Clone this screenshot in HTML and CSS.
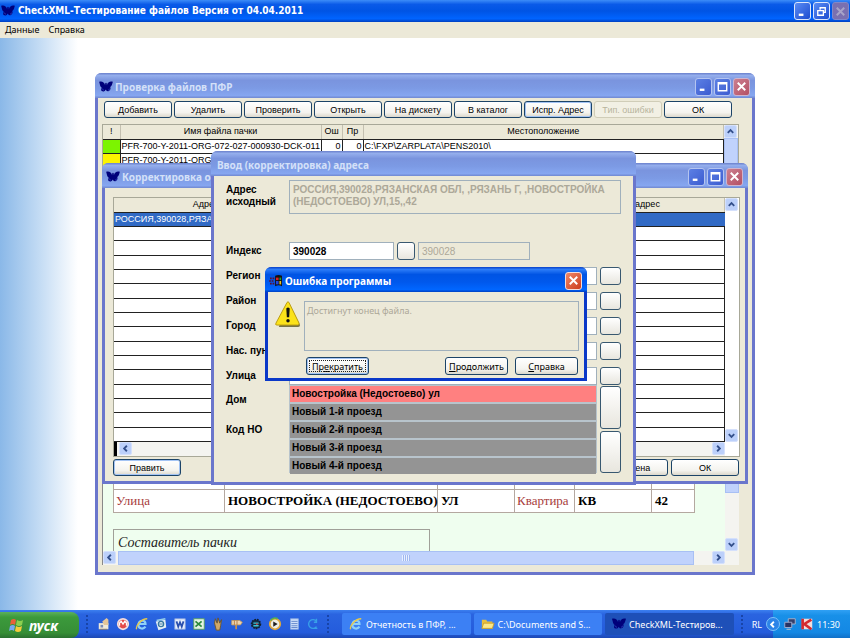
FILE: index.html
```html
<!DOCTYPE html>
<html lang="ru">
<head>
    <meta charset="UTF-8">
    <meta name="viewport" content="width=device-width, initial-scale=1.0">
    <title>CheckXML-Тестирование файлов</title>
    <link rel="stylesheet" href="styles.css">
</head>
<body>
    <!-- Общие значки -->
    <svg class="defs" aria-hidden="true">
        <symbol id="butterfly" viewBox="0 0 16 14">
            <path d="M0 1c3-1 6 0 7 4 0-2 0-3 1-3s1 1 1 3c1-4 4-5 7-4-1 3-1 5-3 6 1 3-1 5-3 5-1 0-2-1-2-2-1 1-2 3-4 2-2 0-2-2-1-4C1 7 1 4 0 1z" fill="#00007a"/>
            <path d="M4 9l1 2M12 9l-1 2" stroke="#3347c8" stroke-width="1"/>
        </symbol>
        <symbol id="min" viewBox="0 0 16 16"><path d="M4 11.500h5" stroke="#fff" stroke-width="2.500"/></symbol>
        <symbol id="max" viewBox="0 0 16 16"><path d="M3.500 4h9v8.500h-9z M3.500 5h9" stroke="#fff" stroke-width="1.500" fill="none"/></symbol>
        <symbol id="restore" viewBox="0 0 16 16"><path d="M6.500 6V4H12v5h-2M4 7h6v5H4z" stroke="#fff" stroke-width="1.400" fill="none"/></symbol>
        <symbol id="close" viewBox="0 0 16 16"><path d="M4 4l8 8M12 4l-8 8" stroke="currentColor" stroke-width="2"/></symbol>
        <symbol id="arrow" viewBox="0 0 12 12"><path d="M3 7.500l3-3 3 3" stroke="#34508c" stroke-width="2" fill="none"/></symbol>
        <symbol id="ie" viewBox="0 0 16 16">
            <path d="M12 11c-3 4-9 2-8-3s8-5 8 0H5" fill="none" stroke="#8fd0f8" stroke-width="2.500"/>
            <path d="M2 14c-2-3 5-12 12-12" fill="none" stroke="#e8c84a" stroke-width="1.500"/>
        </symbol>
    </svg>

    <header class="app-title">
        <svg class="ico"><use href="#butterfly"/></svg>
        <h1>CheckXML-Тестирование файлов Версия от 04.04.2011</h1>
        <div class="win-buttons">
            <button aria-label="Свернуть"><svg><use href="#min"/></svg></button>
            <button aria-label="Восстановить"><svg><use href="#restore"/></svg></button>
            <button class="off" aria-label="Закрыть" disabled><svg><use href="#close"/></svg></button>
        </div>
    </header>
    <nav class="menu">
        <a href="#">Данные</a>
        <a href="#">Справка</a>
    </nav>

    <main class="desktop">
        <!-- Проверка файлов -->
        <section class="window win-check">
            <div class="title-bar">
                <svg class="ico"><use href="#butterfly"/></svg>
                <h2>Проверка файлов ПФР</h2>
                <div class="win-buttons">
                    <button aria-label="Свернуть"><svg><use href="#min"/></svg></button>
                    <button aria-label="Развернуть"><svg><use href="#max"/></svg></button>
                    <button class="red" aria-label="Закрыть"><svg><use href="#close"/></svg></button>
                </div>
            </div>
            <div class="toolbar">
                <button class="btn">Добавить</button>
                <button class="btn">Удалить</button>
                <button class="btn">Проверить</button>
                <button class="btn">Открыть</button>
                <button class="btn">На дискету</button>
                <button class="btn">В каталог</button>
                <button class="btn focus">Испр. Адрес</button>
                <button class="btn" disabled>Тип. ошибки</button>
                <button class="btn">ОК</button>
            </div>
            <div class="grid-box files">
                <table>
                    <colgroup><col class="c-mark"><col class="c-name"><col class="c-num"><col class="c-num"><col></colgroup>
                    <thead><tr><th>!</th><th>Имя файла пачки</th><th>Ош</th><th>Пр</th><th>Местоположение</th></tr></thead>
                    <tbody>
                        <tr><td class="green"></td><td>PFR-700-Y-2011-ORG-072-027-000930-DCK-011</td><td class="num">0</td><td class="num">0</td><td>C:\FXP\ZARPLATA\PENS2010\</td></tr>
                        <tr><td class="yellow"></td><td>PFR-700-Y-2011-ORG</td><td></td><td></td><td></td></tr>
                    </tbody>
                </table>
                <div class="vscroll"><button aria-label="Вверх"><svg><use href="#arrow"/></svg></button><span class="thumb"></span></div>
            </div>
            <div class="report">
                <div class="report-page">
                    <table>
                        <colgroup><col class="r1"><col class="r2"><col class="r3"><col class="r4"><col class="r3"><col></colgroup>
                        <tr><td></td><td></td><td></td><td></td><td></td><td></td></tr>
                        <tr><td class="key">Улица</td><td>НОВОСТРОЙКА (НЕДОСТОЕВО)</td><td>УЛ</td><td class="key">Квартира</td><td>КВ</td><td>42</td></tr>
                    </table>
                    <p class="author">Составитель пачки</p>
                </div>
                <div class="vscroll"><span class="thumb"></span><button class="down" aria-label="Вниз"><svg><use href="#arrow"/></svg></button></div>
                <div class="hscroll">
                    <button class="left" aria-label="Влево"><svg><use href="#arrow"/></svg></button>
                    <span class="thumb"><i></i></span>
                    <button class="right" aria-label="Вправо"><svg><use href="#arrow"/></svg></button>
                </div>
            </div>
        </section>

        <!-- Корректировка -->
        <section class="window win-fix">
            <div class="title-bar">
                <svg class="ico"><use href="#butterfly"/></svg>
                <h2>Корректировка о</h2>
                <div class="win-buttons">
                    <button aria-label="Свернуть"><svg><use href="#min"/></svg></button>
                    <button aria-label="Развернуть"><svg><use href="#max"/></svg></button>
                    <button class="red" aria-label="Закрыть"><svg><use href="#close"/></svg></button>
                </div>
            </div>
            <div class="grid-box addresses">
                <table>
                    <colgroup><col class="a1"><col><col class="a3"></colgroup>
                    <thead><tr><th>Адрес</th><th></th><th>адрес</th></tr></thead>
                    <tbody>
                        <tr class="selected"><td>РОССИЯ,390028,РЯЗАНСКАЯ</td><td></td><td></td></tr>
                        <tr><td colspan="3"></td></tr>
                        <tr><td colspan="3"></td></tr>
                        <tr><td colspan="3"></td></tr>
                        <tr><td colspan="3"></td></tr>
                        <tr><td colspan="3"></td></tr>
                        <tr><td colspan="3"></td></tr>
                        <tr><td colspan="3"></td></tr>
                        <tr><td colspan="3"></td></tr>
                        <tr><td colspan="3"></td></tr>
                        <tr><td colspan="3"></td></tr>
                        <tr><td colspan="3"></td></tr>
                        <tr><td colspan="3"></td></tr>
                        <tr><td colspan="3"></td></tr>
                        <tr><td colspan="3"></td></tr>
                        <tr><td colspan="3"></td></tr>
                    </tbody>
                </table>
                <div class="vscroll"><button aria-label="Вверх"><svg><use href="#arrow"/></svg></button><button class="down" aria-label="Вниз"><svg><use href="#arrow"/></svg></button></div>
                <div class="hscroll">
                    <span class="split"></span>
                    <button class="left" aria-label="Влево"><svg><use href="#arrow"/></svg></button>
                    <button class="right" aria-label="Вправо"><svg><use href="#arrow"/></svg></button>
                </div>
            </div>
            <div class="fix-buttons">
                <button class="btn focus">Править</button>
                <button class="btn push">Отмена</button>
                <button class="btn">ОК</button>
            </div>
        </section>

        <!-- Ввод адреса -->
        <section class="window win-input">
            <div class="title-bar"><h2>Ввод (корректировка) адреса</h2></div>
            <form class="address-form">
                <div class="row source">
                    <label for="source">Адрес исходный</label>
                    <textarea id="source" disabled>РОССИЯ,390028,РЯЗАНСКАЯ ОБЛ, ,РЯЗАНЬ Г, ,НОВОСТРОЙКА (НЕДОСТОЕВО) УЛ,15,,42</textarea>
                </div>
                <div class="row">
                    <label for="zip">Индекс</label>
                    <input class="zip" id="zip" value="390028">
                    <button class="pick small" type="button" aria-label="Выбрать индекс"></button>
                    <input class="zip2" aria-label="Индекс" value="390028" disabled>
                </div>
                <div class="row"><label for="region">Регион</label><input id="region"><button class="pick" type="button" aria-label="Выбрать регион"></button></div>
                <div class="row"><label for="area">Район</label><input id="area"><button class="pick" type="button" aria-label="Выбрать район"></button></div>
                <div class="row"><label for="city">Город</label><input id="city"><button class="pick" type="button" aria-label="Выбрать город"></button></div>
                <div class="row"><label for="place">Нас. пункт</label><input id="place"><button class="pick" type="button" aria-label="Выбрать пункт"></button></div>
                <div class="row"><label for="street">Улица</label><input id="street"><button class="pick" type="button" aria-label="Выбрать улицу"></button></div>
                <div class="lower">
                    <div class="lower-labels"><span>Дом</span><span>Код НО</span></div>
                    <ul class="streets">
                        <li class="current">Новостройка (Недостоево) ул</li>
                        <li>Новый 1-й проезд</li>
                        <li>Новый 2-й проезд</li>
                        <li>Новый 3-й проезд</li>
                        <li>Новый 4-й проезд</li>
                    </ul>
                    <div class="tall">
                        <button class="pick" type="button" aria-label="Страница вверх"></button>
                        <button class="pick" type="button" aria-label="Страница вниз"></button>
                    </div>
                </div>
            </form>
        </section>

        <!-- Сообщение об ошибке -->
        <section class="window win-error active" role="dialog" aria-label="Ошибка программы">
            <div class="title-bar">
                <svg class="ico" viewBox="0 0 16 14">
                    <path d="M7 1q4-2 8 0v12q-4-2-8 0z" fill="#111"/>
                    <path d="M1 4h5M0 7h6M1 10h5" stroke="#5a1030" stroke-width="2" stroke-dasharray="2 1"/>
                    <path d="M8 3h3v3H8z" fill="#e02020"/><path d="M12 3h2v3h-2z" fill="#18a030"/>
                    <path d="M8 7h3v4H8z" fill="#2048e0"/><path d="M12 7h2v4h-2z" fill="#e8c020"/>
                </svg>
                <h2>Ошибка программы</h2>
                <div class="win-buttons"><button class="red" aria-label="Закрыть"><svg><use href="#close"/></svg></button></div>
            </div>
            <div class="error-body">
                <svg class="warn" viewBox="0 0 27 27">
                    <path d="M14 2l12 23q0 2-2 2H4z" fill="#777448"/>
                    <path d="M12.500 1.500q1-1.500 2 0L25 23q.5 2-1.500 2H2q-2 0-1-2z" fill="#fbe21a" stroke="#b99a10"/>
                    <path d="M12.500 8q1-1 2 0l-.5 8h-1z" fill="#111" stroke="#111" stroke-width="1.500"/>
                    <circle cx="13.500" cy="20.500" r="1.800" fill="#111"/>
                </svg>
                <textarea aria-label="Текст ошибки" disabled>Достигнут конец файла.</textarea>
            </div>
            <div class="error-buttons">
                <button class="btn focus dotted">Пр<u>е</u>кратить</button>
                <button class="btn push"><u>П</u>родолжить</button>
                <button class="btn"><u>С</u>правка</button>
            </div>
        </section>
    </main>

    <!-- Панель задач -->
    <footer class="taskbar">
        <button class="start">
            <svg viewBox="0 0 16 16">
                <path d="M2 3q3-2 5 0L6 8Q4 6 1 8z" fill="#e8603a"/><path d="M8 3q3 2 6 0l-1 5q-3 2-6 0z" fill="#8cd050"/>
                <path d="M1 9q3-2 5 0l-1 5q-2-2-5 0z" fill="#78a8f0"/><path d="M7 9q3 2 6 0l-1 5q-3 2-6 0z" fill="#f4cc3c"/>
            </svg>
            пуск
        </button>
        <i class="grip"></i>
        <div class="quick">
            <svg viewBox="0 0 16 16"><path d="M2 7h11v7H2z" fill="#f0ead8"/><path d="M6 5l5-4 2 2v6H8z" fill="#e3c69a"/><path d="M4 9h3v3H4z" fill="#7a8cb8"/><path d="M3 14h9" stroke="#876"/></svg>
            <svg viewBox="0 0 16 16"><circle cx="8" cy="8" r="6" fill="#e34a4a" stroke="#f4dede" stroke-width="2"/><path d="M4 10V7l2-2 2 3 2-3 2 2v3" fill="none" stroke="#fff" stroke-width="1.500"/></svg>
            <svg><use href="#ie"/></svg>
            <svg viewBox="0 0 16 16"><path d="M2 5l11-2 1 9-9 3z" fill="#e6f0f4"/><path d="M3 4l10-2" stroke="#9ad0e8" stroke-width="2"/><circle cx="8" cy="8" r="3" fill="none" stroke="#3878a0" stroke-width="1.500"/><path d="M6 8h4" stroke="#3878a0"/></svg>
            <svg viewBox="0 0 16 16"><path d="M2 2h12v12H2z" fill="#e8effc" stroke="#88a4dc"/><path d="M4 5l2 6 2-5 2 5 2-6" fill="none" stroke="#2a4fae" stroke-width="2"/></svg>
            <svg viewBox="0 0 16 16"><path d="M2 2h12v12H2z" fill="#e4f4e4" stroke="#56a05a"/><path d="M4 5l7 6M11 5l-7 6" stroke="#2c8a3c" stroke-width="2"/></svg>
            <svg viewBox="0 0 16 16"><path d="M5 2l2 5 1-6 2 6 2-4-1 7-1 5H6L4 7z" fill="#d0a868" stroke="#6c5428"/></svg>
            <svg viewBox="0 0 16 16"><path d="M2 4h9l3 2-2 3H2z" fill="#eed4ae" stroke="#c49a60"/><path d="M5 4v5M8 4v5" stroke="#b4763c"/><path d="M7 9v5" stroke="#c89050" stroke-width="2"/></svg>
            <svg viewBox="0 0 16 16"><circle cx="8" cy="8" r="5" fill="#163048" stroke="#102030" stroke-width="2" stroke-dasharray="2 1"/><path d="M5 7h6M5 10h6" stroke="#3cc4d8" stroke-width="1.500"/><circle cx="9" cy="8" r="1" fill="#e04040"/></svg>
            <svg viewBox="0 0 16 16"><circle cx="8" cy="8" r="6" fill="#f0f0e4" stroke="#e0a83c" stroke-width="2"/><path d="M3 4a6 6 0 0 1 8-2" stroke="#58b050" stroke-width="2" fill="none"/><path d="M6 5l5 3-5 3z" fill="#222"/></svg>
            <svg viewBox="0 0 16 16"><path d="M4 2h9v12H4z" fill="#cfe0fa" stroke="#88a8e0"/><path d="M5 5h7M5 7.500h7M5 10h7M5 12h7" stroke="#5a80c8"/></svg>
            <svg viewBox="0 0 16 16"><path d="M12 5a5 5 0 1 0 0 6M12 2v4H9M8 13h5" fill="none" stroke="#38a0e8" stroke-width="1.500"/></svg>
        </div>
        <i class="grip"></i>
        <div class="tasks">
            <button><svg><use href="#ie"/></svg><span>Отчетность в ПФР, ...</span></button>
            <button><svg viewBox="0 0 16 16"><path d="M1 3h5l1 2h6v8H1z" fill="#e8c040"/><path d="M3 7h12l-2 6H1z" fill="#fbe88a" stroke="#c89c28"/></svg><span>C:\Documents and S...</span></button>
            <button class="pressed"><svg><use href="#butterfly"/></svg><span>CheckXML-Тестиров...</span></button>
        </div>
        <i class="grip"></i>
        <span class="lang">RL</span>
        <div class="tray">
            <button aria-label="Скрытые значки"><svg viewBox="0 0 12 12"><path d="M7.500 3l-3 3 3 3" stroke="#fff" stroke-width="2" fill="none"/></svg></button>
            <svg viewBox="0 0 16 16"><path d="M6 2h8v6H6z" fill="#34406c" stroke="#b0b8d0"/><path d="M2 6h8v6H2z" fill="#283464" stroke="#a8b4d4"/><path d="M4 14h5" stroke="#ccc"/></svg>
            <svg viewBox="0 0 16 16"><path d="M2 2h12v12H2z" fill="#f0dede"/><path d="M3 2v12M13 3l-8 5 8 6" fill="none" stroke="#d42a30" stroke-width="3"/></svg>
            <time>11:30</time>
        </div>
    </footer>
</body>
</html>
```
FILE: styles.css
```css
* {
    box-sizing: border-box;
}

body {
    margin: 0;
    height: 100vh;
    display: flex;
    flex-direction: column;
    overflow: hidden;
    font-family: "Liberation Sans", Arial, sans-serif;
    font-size: 9px;
    color: #000;
}

button, input, textarea {
    font: inherit;
    color: inherit;
    margin: 0;
    padding: 0;
}

h1, h2, p, ul {
    margin: 0;
    padding: 0;
}

.defs {
    position: absolute;
    width: 0;
    height: 0;
}

.ico {
    width: 14px;
    height: 12px;
    flex: none;
}

/* Заголовок программы и меню */
.app-title {
    height: 22px;
    flex: none;
    display: flex;
    align-items: center;
    gap: 3px;
    padding: 0 1px 0 1px;
    background: linear-gradient(#3c8cf8, #0a5ae8 20%, #0054e4 50%, #0064ff 85%, #0040c0);
}

h1, h2 {
    flex: 1;
    font-family: "Noto Sans", sans-serif;
    font-size: 10px;
    line-height: 14px;
    font-weight: bold;
    white-space: nowrap;
    color: #fff;
}

h1 {
    font-family: "DejaVu Sans Condensed", "DejaVu Sans", sans-serif;
    font-stretch: condensed;
}

.menu {
    height: 16px;
    flex: none;
    display: flex;
    align-items: center;
    gap: 9px;
    padding: 0 5px 2px;
    background: #ece9d8;
    font-family: "Noto Sans", sans-serif;
}

.menu a {
    color: #000;
    text-decoration: none;
}

.win-buttons {
    display: flex;
    gap: 2px;
}

.win-buttons button {
    width: 17px;
    height: 18px;
    display: grid;
    place-items: center;
    border: 1px solid #dce6fa;
    border-radius: 3px;
    color: #fff;
    background: linear-gradient(135deg, #5a8cf4, #1c4cd0);
}

.win-buttons svg {
    width: 15px;
    height: 15px;
}

.win-buttons .off {
    color: #a8a4c8;
    border-color: #8088c8;
    background: #7a70b0;
}

/* Рабочая область */
.desktop {
    flex: 1;
    position: relative;
    overflow: hidden;
    background: linear-gradient(90deg, #8ab8e8, #c4dcf4 40px, #fff 78px);
}

.window {
    position: absolute;
    display: flex;
    flex-direction: column;
    border: 3px solid #6a76cc;
    border-top: 0;
    border-radius: 7px 7px 0 0;
    background: #ece9d8;
}

.title-bar {
    height: 25px;
    flex: none;
    display: flex;
    align-items: center;
    gap: 2px;
    margin: 0 -3px;
    padding: 2px 5px 0 4px;
    border-radius: 6px 6px 0 0;
    background: linear-gradient(#6a80cc, #94aeec 10%, #7a94de 30%, #7c9ae4 60%, #86a6f0 90%, #7088d0);
}

.title-bar h2 {
    color: #d4e0f8;
}

.window .win-buttons button {
    border-color: #b4c4f0;
    background: linear-gradient(135deg, #5c80e4, #3c5cd0);
}

.window .win-buttons .red {
    border-color: #d0b4cc;
    background: linear-gradient(135deg, #cc8090, #b45064);
}

.btn {
    width: 68px;
    height: 17px;
    border: 1px solid #1c4468;
    border-radius: 3px;
    background: linear-gradient(#fff, #f4f3ee 70%, #dcd8cc);
    white-space: nowrap;
}

.btn.focus {
    box-shadow: inset 0 0 0 1px #a4c4f4;
}

.btn:disabled {
    color: #b8b49c;
    border-color: #d0cdb8;
    background: #f2f0e4;
}

.push {
    margin-left: auto;
}

/* Таблицы */
.grid-box {
    display: grid;
    grid-template-columns: 1fr 14px;
    background: #fff;
    border: 1px solid #a8a898;
    overflow: hidden;
}

.grid-box table {
    width: 100%;
    table-layout: fixed;
    border-collapse: collapse;
}

.grid-box th, .grid-box td {
    height: 14px;
    padding: 0 1px;
    line-height: 13px;
    white-space: nowrap;
    overflow: hidden;
    border: 1px solid #222;
    border-width: 0 1px 1px 0;
}

.grid-box th {
    font-weight: normal;
    background: #ece9d8;
    border-right-color: #c4c0b0;
}

.vscroll, .hscroll {
    display: flex;
    background: #f4f4f0;
}

.vscroll {
    flex-direction: column;
    justify-content: space-between;
}

.hscroll {
    justify-content: space-between;
}

.vscroll button, .hscroll button {
    width: 13px;
    height: 13px;
    flex: none;
    display: grid;
    place-items: center;
    border: 1px solid #d4e0fc;
    border-radius: 2px;
    background: #bcd0fa;
}

.vscroll svg, .hscroll svg {
    width: 11px;
    height: 11px;
}

.down svg {
    rotate: 180deg;
}

.left svg {
    rotate: -90deg;
}

.right svg {
    rotate: 90deg;
}

.thumb {
    display: grid;
    place-items: center;
    background: #c0d2fc;
    border: 1px solid #a8c0f4;
}

.thumb i {
    width: 8px;
    height: 6px;
    background: repeating-linear-gradient(90deg, #e8f0ff 0 1px, #a0b8f0 1px 2px);
}

/* Проверка файлов */
.win-check {
    left: 95px;
    top: 35px;
    width: 660px;
    height: 502px;
    padding: 0 13px 7px 4px;
}

.win-check .title-bar {
    margin: 0 -16px 0 -7px;
}

.toolbar {
    display: flex;
    gap: 2px;
    padding: 3px 2px;
}

.files {
    height: 45px;
    flex: none;
    margin-top: 3px;
}

.files .thumb {
    flex: 1;
}

.c-mark {
    width: 17px;
}

.c-name {
    width: 201px;
}

.c-num {
    width: 21px;
}

.num {
    text-align: right;
}

.green {
    background: #7cf400;
}

.yellow {
    background: #fcf400;
}

.report {
    flex: 1;
    display: grid;
    grid-template: 1fr 14px / 1fr 14px;
    margin-top: 4px;
    border-left: 1px solid #888;
    background: #f4f4f0;
    overflow: hidden;
}

.report-page {
    display: flex;
    flex-direction: column;
    justify-content: flex-end;
    padding-left: 10px;
    background: #effeef;
    font-family: "Liberation Serif", serif;
    font-size: 13px;
    overflow: hidden;
}

.report table {
    width: 582px;
    table-layout: fixed;
    border-collapse: collapse;
    background: #fff;
    font-weight: bold;
}

.report td {
    height: 23px;
    padding: 0 3px;
    border: 1px solid #b4a8a0;
    white-space: nowrap;
}

.report .key {
    padding: 0 2px;
    font-weight: normal;
    color: #a83c3c;
}

.r1 {
    width: 111px;
}

.r2 {
    width: 213px;
}

.r3 {
    width: 77px;
}

.r4 {
    width: 60px;
}

.author {
    width: 317px;
    margin-top: 16px;
    padding: 4px 4px 0;
    line-height: 17px;
    border: 1px solid #a0a098;
    border-bottom: 0;
    font-size: 14px;
    font-style: italic;
    color: #222;
}

.report .vscroll {
    justify-content: flex-end;
}

.report .vscroll .thumb {
    height: 320px;
    margin-bottom: 45px;
}

.report .hscroll .thumb {
    flex: 1;
    margin: 0 18px 0 2px;
}

/* Корректировка */
.win-fix {
    left: 102px;
    top: 125px;
    width: 646px;
    height: 321px;
    padding: 0 5px 5px 8px;
}

.win-fix .title-bar {
    margin: 0 -8px 0 -11px;
}

.addresses {
    height: 260px;
    margin-top: 9px;
    grid-template-rows: 1fr 14px;
}

.addresses th:not(:last-child) {
    border-right-color: #ece9d8;
}

.addresses .vscroll {
    background: #fff;
}

.a1 {
    width: 184px;
}

.a3 {
    width: 154px;
}

.selected td {
    color: #fff;
    background: #316ac5;
    border-right-color: #316ac5;
}

.split {
    width: 3px;
    margin-right: 2px;
    background: #000;
}

.hscroll .split + .left {
    margin-right: auto;
}

.fix-buttons {
    display: flex;
    gap: 3px;
    padding: 2px 1px 0 0;
}

/* Ввод адреса */
.win-input {
    left: 211px;
    top: 113px;
    width: 425px;
    height: 334px;
}

.win-input .title-bar {
    padding-left: 6px;
}

.address-form {
    display: flex;
    flex-direction: column;
    gap: 7px;
    padding: 4px 12px 0;
    font-size: 10px;
    line-height: 12px;
    font-weight: bold;
}

.row {
    display: flex;
    align-items: center;
    gap: 3px;
}

.row label {
    width: 60px;
    flex: none;
    white-space: nowrap;
}

.row input {
    flex: 1;
    min-width: 0;
    height: 18px;
    padding-left: 3px;
    border: 1px solid #a0b0bc;
    background: #fff;
}

.row .zip {
    flex: none;
    width: 105px;
}

.row .zip2 {
    flex: none;
    width: 112px;
    font-weight: normal;
}

.source {
    align-items: flex-start;
    margin-bottom: 21px;
}

.source label {
    white-space: normal;
    padding-top: 4px;
}

textarea {
    flex: 1;
    resize: none;
    overflow: hidden;
    border: 1px solid #a0b0bc;
}

.source textarea {
    height: 34px;
    padding: 3px;
}

.row input:disabled, textarea:disabled {
    color: #aca899;
    background: #ece9d8;
}

.pick {
    width: 21px;
    height: 18px;
    flex: none;
    border: 1px solid #385870;
    border-radius: 3px;
    background: linear-gradient(#fff, #e8e6de);
}

.pick.small {
    width: 18px;
}

.lower {
    display: flex;
    gap: 3px;
    margin-top: -7px;
}

.lower-labels {
    width: 60px;
    display: flex;
    flex-direction: column;
    gap: 18px;
    padding-top: 9px;
}

.streets {
    flex: 1;
    height: 88px;
    display: grid;
    grid-auto-rows: 1fr;
    gap: 2px;
    padding: 1px;
    list-style: none;
    background: #b8c4cc;
}

.streets li {
    padding-left: 2px;
    line-height: 16px;
    background: #949494;
}

.streets .current {
    background: #ff8080;
}

.tall {
    display: flex;
    flex-direction: column;
    gap: 2px;
    padding-top: 1px;
}

.tall .pick {
    flex: 1;
}

/* Сообщение об ошибке */
.win-error {
    left: 265px;
    top: 229px;
    width: 322px;
    height: 114px;
    border-color: #0a38c8;
}

.active .title-bar {
    background: linear-gradient(#0840c8, #2c7cf8 10%, #0054e4 30%, #0058ec 60%, #0066ff 90%, #0040c0);
}

.active .title-bar h2 {
    color: #fff;
}

.window.active .win-buttons .red {
    border-color: #f4dcd8;
    background: linear-gradient(135deg, #f08868, #cc3c1c);
}

.error-body {
    display: flex;
    gap: 3px;
    padding: 9px 5px 6px 7px;
    font-family: "Noto Sans", sans-serif;
}

.warn {
    width: 26px;
    height: 26px;
}

.error-body textarea {
    height: 50px;
    padding: 2px;
}

.error-buttons {
    display: flex;
    gap: 7px;
    padding: 0 6px 0 38px;
    font-family: "Noto Sans", sans-serif;
}

.error-buttons .btn {
    width: 63px;
    height: 18px;
}

.dotted {
    outline: 1px dotted #222;
    outline-offset: -4px;
}

/* Панель задач */
.taskbar {
    height: 28px;
    flex: none;
    display: flex;
    align-items: center;
    background: linear-gradient(#3c80f0, #2a64e0 15%, #245cdc 80%, #1c48b4);
    font-family: "Noto Sans", sans-serif;
    color: #fff;
}

.taskbar svg {
    width: 14px;
    height: 14px;
    flex: none;
}

.start {
    width: 79px;
    height: 26px;
    align-self: flex-end;
    display: flex;
    align-items: center;
    gap: 4px;
    padding-left: 9px;
    border: 0;
    border-radius: 0 8px 8px 0;
    background: linear-gradient(#5cb05c, #3c9a3c 20%, #368e36 80%, #2a7030);
    font-size: 14px;
    font-weight: bold;
    font-style: italic;
}

.start svg {
    width: 16px;
    height: 16px;
}

.grip {
    width: 4px;
    height: 18px;
    margin: 0 7px;
    border-left: 2px dotted #1844a8;
}

.quick {
    display: flex;
    gap: 5px;
}

.tasks {
    flex: 1;
    display: flex;
    gap: 3px;
    margin-left: 4px;
}

.tasks button {
    flex: 1;
    height: 22px;
    display: flex;
    align-items: center;
    gap: 3px;
    padding-left: 7px;
    border: 0;
    border-radius: 2px;
    background: #3c80f4;
    white-space: nowrap;
    overflow: hidden;
    color: #fff;
}

.tasks .pressed {
    background: #1e50b8;
}

.tray {
    height: 28px;
    display: flex;
    align-items: center;
    gap: 3px;
    padding-right: 10px;
    margin-left: 11px;
    background: linear-gradient(#30a0f4, #1890e8 20%, #1488e4 80%, #1070c8);
}

.tray button {
    width: 14px;
    height: 14px;
    margin-left: -7px;
    border: 1px solid #7cc0f8;
    border-radius: 50%;
    display: grid;
    place-items: center;
    background: #2c84e8;
}

.tray button svg {
    width: 11px;
    height: 11px;
}
```
